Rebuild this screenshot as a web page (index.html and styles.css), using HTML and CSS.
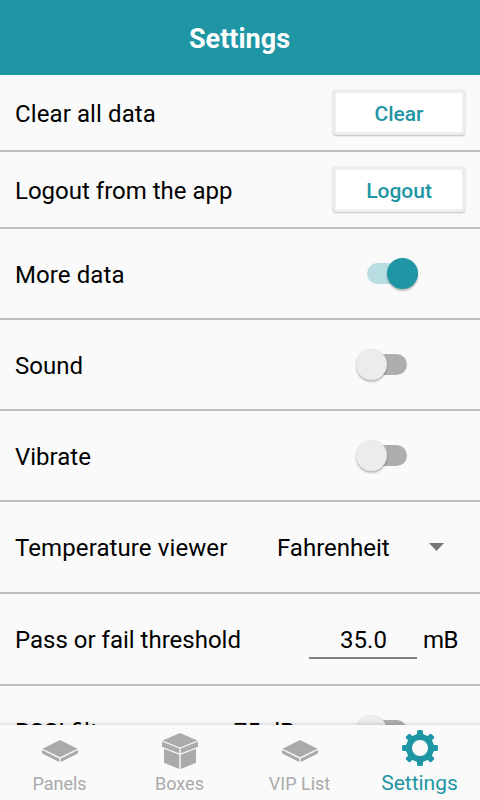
FILE: index.html
```html
<!DOCTYPE html>
<html lang="en">
<head>
<meta charset="utf-8">
<title>Settings</title>
<link rel="stylesheet" href="styles.css">
</head>
<body>
<div class="app">
  <header class="header"><h1>Settings</h1></header>
  <main class="list">
    <section class="row row-button"><span class="label spaced">Clear all data</span><button class="btn">Clear</button></section>
    <section class="row row-button"><span class="label">Logout from the app</span><button class="btn">Logout</button></section>
    <section class="row"><span class="label spaced">More data</span><span class="switch on"><span class="thumb"></span></span></section>
    <section class="row"><span class="label">Sound</span><span class="switch"><span class="thumb"></span></span></section>
    <section class="row"><span class="label">Vibrate</span><span class="switch"><span class="thumb"></span></span></section>
    <section class="row row-tall"><span class="label spaced">Temperature viewer</span><span class="select"><span class="select-text">Fahrenheit</span><svg class="caret" width="15" height="8" viewBox="0 0 15 8"><path d="M0 0H15L7.5 8Z"/></svg></span></section>
    <section class="row row-tall"><span class="label">Pass or fail threshold</span><span class="field"><span class="input">35.0</span><span class="unit">mB</span></span></section>
    <section class="row"><span class="label">RSSI filter</span><span class="value">-75 dB</span><span class="switch"><span class="thumb"></span></span></section>
  </main>
  <nav class="tabs">
    <a class="tab">
      <svg class="icon" width="36" height="36" viewBox="0 0 36 36"><path d="M18 7L35.500 15.800L18 24.300L.5 15.800Z"/><path d="M0 17L17.300 25.400V29L0 20.600Z"/><path d="M36 17L18.700 25.400V29L36 20.600Z"/></svg>
      <span class="tab-label">Panels</span>
    </a>
    <a class="tab">
      <svg class="icon" width="36" height="36" viewBox="0 0 36 36"><path d="M18 0L35.500 7.500L18 14.500L.5 7.500Z"/><path d="M0 8.600L17.300 15.600V20.500L0 13.700Z"/><path d="M36 8.600L18.700 15.600V20.500L36 13.700Z"/><path d="M2 15.700L17.300 21.700V36L2 29.700Z"/><path d="M34 15.700L18.700 21.700V36L34 29.700Z"/></svg>
      <span class="tab-label">Boxes</span>
    </a>
    <a class="tab">
      <svg class="icon" width="36" height="36" viewBox="0 0 36 36"><path d="M18 7L35.500 15.800L18 24.300L.5 15.800Z"/><path d="M0 17L17.300 25.400V29L0 20.600Z"/><path d="M36 17L18.700 25.400V29L36 20.600Z"/></svg>
      <span class="tab-label">VIP List</span>
    </a>
    <a class="tab active">
      <svg class="icon" width="36" height="36" viewBox="0 0 36 36"><circle cx="18" cy="18" r="11" fill="none" stroke="currentColor" stroke-width="6"/><path id="tooth" d="M13.500 6L15 4V1.500Q15 0 16.500 0H19.500Q21 0 21 1.500V4L22.500 6Z"/><use href="#tooth" transform="rotate(45 18 18)"/><use href="#tooth" transform="rotate(90 18 18)"/><use href="#tooth" transform="rotate(135 18 18)"/><use href="#tooth" transform="rotate(180 18 18)"/><use href="#tooth" transform="rotate(225 18 18)"/><use href="#tooth" transform="rotate(270 18 18)"/><use href="#tooth" transform="rotate(315 18 18)"/></svg>
      <span class="tab-label">Settings</span>
    </a>
  </nav>
</div>
</body>
</html>
```

FILE: styles.css
```css
* { box-sizing: border-box; }
body { margin: 0; background: #fafafa; color: #000; font-family: Roboto, sans-serif; font-size: 24px; }
.app { display: flex; flex-direction: column; width: 480px; height: 800px; overflow: hidden; }
.header { flex: none; height: 75px; display: flex; align-items: center; justify-content: center; background: #1e96a4; color: #fff; padding: 3px 1px 0 0; }
.header h1 { margin: 0; font-size: 27px; font-weight: 700; line-height: 32px; }
.list { flex: 1; min-height: 0; overflow: hidden; }
.row { display: flex; align-items: center; height: 91px; padding-left: 15px; border-bottom: 2px solid #c0c0c0; line-height: 28px; white-space: nowrap; }
.row-button { height: 77px; }
.row-tall { height: 92px; }
.label { flex: 1; padding-top: 2px; }
.spaced { letter-spacing: .1px; }
.btn { width: 132px; height: 45px; margin: 0 15px 0 0; padding: 2px 0 0; border: 3px solid #eee; border-radius: 3px; background: #fff; color: #1e96a4; font: 500 21px/28px Roboto, sans-serif; box-shadow: 0 1px 2px rgba(0,0,0,.22), 0 0 1px rgba(0,0,0,.2); }
.switch { position: relative; width: 40px; height: 21px; margin-right: 73px; border-radius: 11px; background: #aeaeae; }
.thumb { position: absolute; left: -11px; top: -5px; width: 31px; height: 31px; border-radius: 50%; background: #ececec; box-shadow: 0 2px 2px rgba(0,0,0,.24), 0 0 1px rgba(0,0,0,.15); }
.switch.on { background: #b9dee1; }
.switch.on .thumb { left: 20px; background: #1e96a4; }
.select { display: flex; align-items: center; width: 203px; }
.select-text { width: 152px; padding-top: 2px; }
.caret { fill: #757575; }
.field { display: flex; align-items: center; width: 171px; }
.input { width: 108px; height: 38px; padding: 5px 0 0 1px; margin-top: 1px; text-align: center; border-bottom: 2px solid #818181; }
.unit { margin-left: 6px; padding-top: 2px; letter-spacing: -.5px; }
.value { width: 140px; padding-top: 2px; }
.tabs { position: relative; flex: none; display: grid; grid-template-columns: repeat(4, 1fr); height: 75px; background: #fafafa; box-shadow: 0 -1px 4px rgba(0,0,0,.16); }
.tab { display: flex; flex-direction: column; align-items: center; padding-top: 8px; color: #aaa; }
.icon { display: block; flex: none; fill: currentColor; }
.tab-label { margin: 4px 1px 0 0; font-size: 18px; line-height: 22px; }
.active { padding-top: 5px; color: #1e96a4; }
.active .tab-label { margin-top: 4px; font-size: 21px; line-height: 26px; }
```
